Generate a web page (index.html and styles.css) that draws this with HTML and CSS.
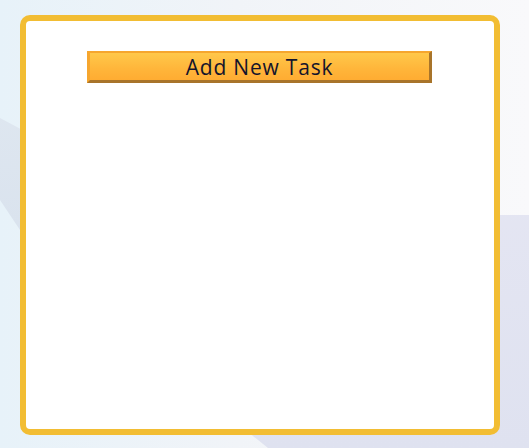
FILE: index.html
```html
<!DOCTYPE html>
<html lang="en">
<head>
<meta charset="utf-8">
<title>Tasks</title>
<link rel="stylesheet" href="styles.css">
</head>
<body>
<div class="scene">
  <main class="card">
    <button class="add-btn" type="button">Add New Task</button>
  </main>
</div>
</body>
</html>
```
FILE: styles.css
```css
html, body {
  margin: 0;
  padding: 0;
  width: 529px;
  height: 448px;
  overflow: hidden;
}
.scene {
  position: relative;
  width: 529px;
  height: 448px;
  box-sizing: border-box;
  padding: 15px 0 0 20px;
  background: linear-gradient(90deg, #e7f2f9 0%, #f1f4f8 45%, #f9f9fb 100%);
}
.scene::before,
.scene::after {
  content: "";
  position: absolute;
  inset: 0;
  z-index: 0;
}
.scene::before {
  background: linear-gradient(180deg, #e2eaf2 0%, #d2dcea 100%);
  clip-path: polygon(0 118px, 60px 150px, 60px 290px, 0 200px);
}
.scene::after {
  background: linear-gradient(180deg, #e8e8f4 0%, #dfe2f0 100%);
  clip-path: polygon(300px 215px, 529px 215px, 529px 448px, 268px 448px, 248px 432px);
}
.card {
  position: relative;
  z-index: 1;
  width: 480px;
  height: 420px;
  box-sizing: border-box;
  border: 6px solid #f2bd33;
  border-radius: 10px;
  background: #ffffff;
  display: flex;
  flex-direction: column;
  align-items: flex-start;
  padding: 30px 0 0 61px;
}
.add-btn {
  width: 345px;
  height: 32px;
  box-sizing: border-box;
  margin: 0;
  padding: 0;
  border-style: solid;
  border-width: 2px 3px 3px 3px;
  border-color: #f6a62e #a8742a #a8742a #f6a62e;
  background: linear-gradient(180deg, #ffc84a 0%, #ffb53a 60%, #ffac32 100%);
  font-family: "Open Sans", "Noto Sans", sans-serif;
  font-size: 21px;
  letter-spacing: 0.8px;
  line-height: 26px;
  color: #14142b;
  text-align: center;
  cursor: pointer;
}
```
